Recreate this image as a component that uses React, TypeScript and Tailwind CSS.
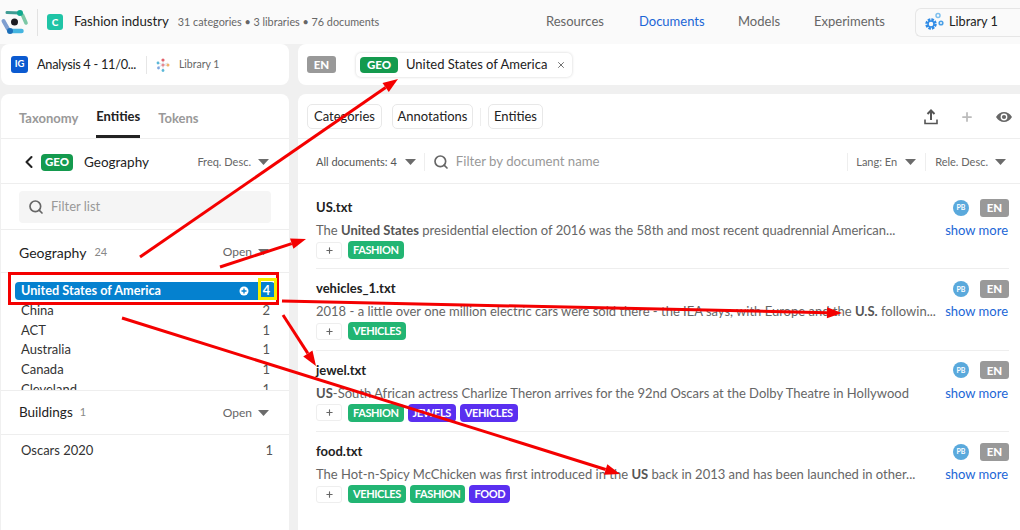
import React from "react";
import { ChevronLeft, Search, X, Plus } from "lucide-react";

const Caret = ({ className = "" }: { className?: string }) => (
  <svg width="11" height="6" viewBox="0 0 11 6" className={className}>
    <path d="M0 0h11L5.500 6z" fill="#6b6b6b" />
  </svg>
);

const Logo = () => (
  <svg width="30" height="30" viewBox="0 0 30 30" fill="none">
    <path d="M7 7.500L20 8" stroke="#3f9c94" strokeWidth="3" strokeLinecap="round" />
    <path d="M22.500 10L26 18" stroke="#7cc8a6" strokeWidth="3.600" strokeLinecap="round" />
    <path d="M11 26L21.500 26" stroke="#45b5e0" strokeWidth="4.500" strokeLinecap="round" />
    <path d="M3.500 16L8 24" stroke="#7f9fd0" strokeWidth="4" strokeLinecap="round" />
    <circle cx="20" cy="8" r="3" fill="#10a88f" />
    <circle cx="10" cy="26" r="3" fill="#1c6fb8" />
    <circle cx="14.500" cy="17" r="3.500" fill="#1c1c22" />
  </svg>
);

const Gears = () => (
  <svg width="22" height="22" viewBox="0 0 22 22" fill="none">
    <circle cx="8" cy="13" r="4.500" stroke="#2f8be6" strokeWidth="2.500" strokeDasharray="2.500 1" />
    <circle cx="8" cy="13" r="3" stroke="#2f8be6" strokeWidth="1.500" />
    <circle cx="15" cy="4.500" r="2" stroke="#7fc0ee" strokeWidth="1.500" />
    <circle cx="18" cy="12" r="1.800" stroke="#4a9fe6" strokeWidth="1.600" />
  </svg>
);

const LibMark = () => (
  <svg width="14" height="14" viewBox="0 0 14 14">
    <path d="M7 2L7 12M2 5L12 8M2 9L12 5" stroke="#d5dbe5" strokeWidth="0.800" />
    <circle cx="7" cy="2" r="1.600" fill="#e2626b" />
    <circle cx="2" cy="5" r="1.400" fill="#5bb8d8" />
    <circle cx="12" cy="7" r="1.500" fill="#f1b26a" />
    <circle cx="2.500" cy="10" r="1.400" fill="#7fa6e0" />
    <circle cx="7" cy="12.500" r="1.400" fill="#5bb8d8" />
    <circle cx="7" cy="7" r="1.500" fill="#e88a90" />
  </svg>
);

const Tag = ({ color, children }: { color: "green" | "purple"; children: React.ReactNode }) => (
  <span
    className={`h-[18px] px-[5px] rounded-[4px] flex items-center text-white text-[11px] font-bold tracking-[-0.4px] ${
      color === "green" ? "bg-[#22b573]" : "bg-[#5a2ff0]"
    }`}
  >
    {children}
  </span>
);

type Doc = {
  name: string;
  text: React.ReactNode;
  tags: { c: "green" | "purple"; t: string }[];
};

const B = ({ children }: { children: React.ReactNode }) => <b className="font-bold text-[#555]">{children}</b>;

const docs: Doc[] = [
  {
    name: "US.txt",
    text: (
      <>
        The <B>United States</B> presidential election of 2016 was the 58th and most recent quadrennial American...
      </>
    ),
    tags: [{ c: "green", t: "FASHION" }],
  },
  {
    name: "vehicles_1.txt",
    text: (
      <>
        2018 - a little over one million electric cars were sold there - the IEA says, with Europe and the <B>U.S.</B> followin...
      </>
    ),
    tags: [{ c: "green", t: "VEHICLES" }],
  },
  {
    name: "jewel.txt",
    text: (
      <>
        <B>US</B>-South African actress Charlize Theron arrives for the 92nd Oscars at the Dolby Theatre in Hollywood
      </>
    ),
    tags: [
      { c: "green", t: "FASHION" },
      { c: "purple", t: "JEWELS" },
      { c: "purple", t: "VEHICLES" },
    ],
  },
  {
    name: "food.txt",
    text: (
      <>
        The Hot-n-Spicy McChicken was first introduced in the <B>US</B> back in 2013 and has been launched in other...
      </>
    ),
    tags: [
      { c: "green", t: "VEHICLES" },
      { c: "green", t: "FASHION" },
      { c: "purple", t: "FOOD" },
    ],
  },
];

const rows: [string, number][] = [
  ["China", 2],
  ["ACT", 1],
  ["Australia", 1],
  ["Canada", 1],
  ["Cleveland", 1],
];

const Arrow = ({ x1, y1, x2, y2 }: { x1: number; y1: number; x2: number; y2: number }) => {
  const a = Math.atan2(y2 - y1, x2 - x1);
  const l = 15;
  const w = 5.500;
  const bx = x2 - l * Math.cos(a);
  const by = y2 - l * Math.sin(a);
  const px = -Math.sin(a) * w;
  const py = Math.cos(a) * w;
  return (
    <g>
      <line x1={x1} y1={y1} x2={bx} y2={by} stroke="#f40000" strokeWidth="3" />
      <polygon points={`${x2},${y2} ${bx + px},${by + py} ${bx - px},${by - py}`} fill="#f40000" />
    </g>
  );
};

export default function App() {
  return (
    <div
      className="relative w-[1020px] h-[530px] overflow-hidden bg-[#f0f0f0] text-[#222]"
      style={{ fontFamily: "Lato, 'Noto Sans', sans-serif" }}
    >
      {/* Header */}
      <header className="h-[44px] bg-[#fafafa] flex items-center">
        <div className="w-[37px] flex items-center shrink-0 -mt-[4px]">
          <Logo />
        </div>
        <div className="w-px h-[27px] bg-[#e2e2e2]" />
        <div className="ml-[9px] w-[16px] h-[16px] rounded-[3px] bg-[#1fc4a6] text-white text-[10px] font-black flex items-center justify-center">
          C
        </div>
        <span className="ml-[11px] text-[13.200px] text-[#222]">Fashion industry</span>
        <span className="ml-[9px] text-[10.800px] text-[#666]">31 categories • 3 libraries • 76 documents</span>
        <nav className="ml-auto flex items-center text-[13px] text-[#666]">
          <span className="w-[93px]">Resources</span>
          <span className="w-[99px] text-[#1b66d6]">Documents</span>
          <span className="w-[76px]">Models</span>
          <span className="w-[101px]">Experiments</span>
        </nav>
        <div className="w-[105px] h-[29px] border border-[#e6e6e6] border-r-0 rounded-l-[6px] flex items-center pl-[7px] gap-[4px] text-[12.700px]">
          <Gears />
          <span>Library 1</span>
        </div>
      </header>

      {/* Tabs strip */}
      <div className="h-[41px] flex gap-[9px] pl-[1px]">
        <div className="w-[288px] bg-white rounded-[8px] flex items-center pl-[10px]">
          <span className="w-[17px] h-[17px] rounded-[3px] bg-[#0b5ad0] text-white text-[9.500px] font-bold flex items-center justify-center">
            IG
          </span>
          <span className="ml-[9px] text-[12.800px] tracking-[-0.3px]">Analysis 4 - 11/0...</span>
          <span className="ml-[10px] w-px h-[18px] bg-[#e6e6e6]" />
          <span className="ml-[9px]">
            <LibMark />
          </span>
          <span className="ml-[9px] text-[10.500px] text-[#666]">Library 1</span>
        </div>
        <div className="flex-1 bg-white rounded-l-[8px] flex items-center pl-[9px]">
          <span className="w-[29px] h-[17px] rounded-[3px] bg-[#999] text-white text-[11.500px] font-black flex items-center justify-center">
            EN
          </span>
          <div className="ml-[20px] h-[24px] w-[216px] rounded-[5px] shadow-[0_0_3px_rgba(0,0,0,0.18)] flex items-center pl-[4px]">
            <span className="w-[38px] h-[16px] rounded-[4px] bg-[#149a4e] text-white text-[11.500px] font-black flex items-center justify-center">
              GEO
            </span>
            <span className="ml-[8px] text-[13px]">United States of America</span>
            <X size={10} strokeWidth={2} className="ml-[9px] text-[#555]" />
          </div>
        </div>
      </div>

      {/* Body */}
      <div className="h-[436px] mt-[9px] flex gap-[9px] pl-[1px]">
        {/* Left panel */}
        <aside className="w-[288px] bg-white rounded-t-[8px] flex flex-col">
          <div className="h-[45px] border-b border-[#eee] flex items-end pl-[18px] gap-[18px] text-[13px] font-bold">
            <span className="h-[44px] flex items-center text-[#999] pt-[5px]">Taxonomy</span>
            <span className="h-[44px] flex items-center text-[#222] pt-[5px] border-b-[3px] border-[#222]">Entities</span>
            <span className="h-[44px] flex items-center text-[#999] pt-[5px]">Tokens</span>
          </div>
          <div className="h-[45px] border-b border-[#eee] flex items-center pl-[18px] pr-[20px] pt-[2px]">
            <ChevronLeft size={20} strokeWidth={2.500} className="text-[#222]" />
            <span className="ml-[2px] w-[32px] h-[17px] rounded-[4px] bg-[#149a4e] text-white text-[11.500px] font-black flex items-center justify-center">
              GEO
            </span>
            <span className="ml-[11px] text-[13.500px]">Geography</span>
            <span className="ml-auto text-[11px] text-[#666]">Freq. Desc.</span>
            <Caret className="ml-[7px]" />
          </div>
          <div className="h-[46px] border-b border-[#eee] px-[18px] flex items-center">
            <div className="w-[252px] h-[32px] bg-[#f5f5f5] rounded-[4px] flex items-center pl-[9px] pt-[1px]">
              <Search size={16} strokeWidth={2.500} className="text-[#666]" />
              <span className="ml-[7px] text-[13px] text-[#999]">Filter list</span>
            </div>
          </div>
          <div className="h-[43px] border-b border-[#eee] flex items-center pl-[18px] pr-[20px] pt-[2px]">
            <span className="text-[14px]">Geography</span>
            <span className="ml-[8px] text-[11px] text-[#888]">24</span>
            <span className="ml-auto text-[12px] text-[#666]">Open</span>
            <Caret className="ml-[6px]" />
          </div>
          <div className="h-[118px] border-b border-[#eee] overflow-hidden pt-[9px] pl-[14px] pr-[14px]">
            <div className="h-[18px] w-[260px] bg-[#0581cf] rounded-[4px] flex items-center pl-[6px] pr-[5px] text-white text-[12.700px] font-bold">
              United States of America
              <svg width="10" height="10" viewBox="0 0 10 10" className="ml-auto">
                <circle cx="5" cy="5" r="4.500" fill="#fff" />
                <path d="M5 2.500v5M2.500 5h5" stroke="#0581cf" strokeWidth="1.300" />
              </svg>
              <span className="ml-[14px]">4</span>
            </div>
            <div className="mt-[1px]">
              {rows.map(([n, c]) => (
                <div key={n} className="h-[19.700px] flex items-center justify-between pl-[6px] pr-[5px] text-[13px] text-[#333]">
                  <span>{n}</span>
                  <span className="text-[#555]">{c}</span>
                </div>
              ))}
            </div>
          </div>
          <div className="h-[44px] border-b border-[#eee] flex items-center pl-[18px] pr-[20px]">
            <span className="text-[13.500px]">Buildings</span>
            <span className="ml-[7px] text-[11px] text-[#888]">1</span>
            <span className="ml-auto text-[12px] text-[#666]">Open</span>
            <Caret className="ml-[6px]" />
          </div>
          <div className="h-[32px] flex items-center justify-between pl-[20px] pr-[16px] text-[13px] text-[#333]">
            <span>Oscars 2020</span>
            <span className="text-[#555]">1</span>
          </div>
        </aside>

        {/* Right panel */}
        <main className="flex-1 bg-white rounded-tl-[8px] flex flex-col">
          <div className="h-[45px] border-b border-[#eee] flex items-center pl-[9px] pr-[7px] pt-[1px]">
            <span className="w-[75px] h-[25px] flex items-center justify-center border border-[#e8e8e8] rounded-[5px] text-[13px]">
              Categories
            </span>
            <span className="ml-[10px] w-[81px] h-[25px] flex items-center justify-center border border-[#e8e8e8] rounded-[5px] text-[13px]">
              Annotations
            </span>
            <span className="mx-[7px] w-px h-[18px] bg-[#eee]" />
            <span className="w-[55px] h-[25px] flex items-center justify-center border border-[#e8e8e8] rounded-[5px] text-[13px]">
              Entities
            </span>
            <svg width="16" height="16" viewBox="0 0 16 16" className="ml-auto" fill="none">
              <path d="M8 11V2M4.500 5L8 1.500 11.500 5" stroke="#555" strokeWidth="2" />
              <path d="M2 10.500V14.500H14V10.500" stroke="#555" strokeWidth="1.600" />
            </svg>
            <Plus size={14} strokeWidth={3} className="ml-[21px] text-[#bbb]" />
            <svg width="18" height="12" viewBox="0 0 18 12" className="ml-[21px]">
              <path d="M1 6C3 2.500 6 1 9 1s6 1.500 8 5c-2 3.500-5 5-8 5S3 9.500 1 6z" fill="#666" />
              <circle cx="9" cy="6" r="3.400" fill="#fff" />
              <circle cx="9" cy="6" r="2.100" fill="#666" />
            </svg>
          </div>
          <div className="h-[45px] border-b border-[#eee] flex items-center pl-[18px] pr-[14px] pt-[2px]">
            <span className="text-[11px] text-[#555]">All documents: 4</span>
            <Caret className="ml-[8px]" />
            <span className="ml-[8px] w-px h-[18px] bg-[#eee]" />
            <Search size={16} strokeWidth={2.500} className="ml-[8px] text-[#666]" />
            <span className="ml-[7px] text-[13.200px] text-[#999]">Filter by document name</span>
            <span className="ml-auto w-px h-[18px] bg-[#eee]" />
            <span className="ml-[8px] text-[11px] text-[#666]">Lang: En</span>
            <Caret className="ml-[8px]" />
            <span className="ml-[9px] w-px h-[18px] bg-[#eee]" />
            <span className="ml-[9px] text-[11px] text-[#666]">Rele. Desc.</span>
            <Caret className="ml-[7px]" />
          </div>
          <div className="pt-[4px] pl-[18px] pr-[11px]">
            {docs.map((d, i) => (
              <div
                key={d.name}
                className={`h-[81.400px] flex flex-col ${i < 3 ? "border-b border-[#eee]" : ""}`}
              >
                <div className="flex items-center h-[38px] pt-[1px]">
                  <span className="text-[13px] font-bold text-[#222]">{d.name}</span>
                  <span className="ml-auto w-[16px] h-[16px] rounded-full bg-[#5aa9dc] text-white text-[7px] font-bold flex items-center justify-center">
                    PB
                  </span>
                  <span className="ml-[11px] w-[29px] h-[18px] rounded-[3px] bg-[#999] text-white text-[11.500px] font-black flex items-center justify-center">
                    EN
                  </span>
                </div>
                <div className="flex items-center h-[15px] -mt-[3px]">
                  <span className="text-[13px] text-[#666] whitespace-nowrap">{d.text}</span>
                  <span className="ml-auto mr-[1px] text-[13px] text-[#1b66d6]">show more</span>
                </div>
                <div className="flex items-center gap-[4px] mt-[3px]">
                  <span className="w-[26px] h-[17px] rounded-[3px] border border-[#eee] flex items-center justify-center mr-[2px]">
                    <Plus size={9} strokeWidth={3} className="text-[#666]" />
                  </span>
                  {d.tags.map((t) => (
                    <Tag key={t.t} color={t.c}>
                      {t.t}
                    </Tag>
                  ))}
                </div>
              </div>
            ))}
          </div>
        </main>
      </div>

      {/* Annotation overlay */}
      <div className="absolute left-[8px] top-[272px] w-[271px] h-[33px] border-[3px] border-[#f40000] pointer-events-none" />
      <div className="absolute left-[258px] top-[278px] w-[19px] h-[22px] border-[3px] border-[#f5ee00] pointer-events-none" />
      <svg width="1020" height="530" className="absolute left-0 top-0 pointer-events-none">
        <Arrow x1={140} y1={257} x2={398} y2={79} />
        <Arrow x1={220} y1={267} x2={306} y2={239} />
        <Arrow x1={282} y1={301} x2={842} y2={313} />
        <Arrow x1={283} y1={315} x2={316} y2={366} />
        <Arrow x1={122} y1={318} x2={620} y2={474} />
      </svg>
    </div>
  );
}
